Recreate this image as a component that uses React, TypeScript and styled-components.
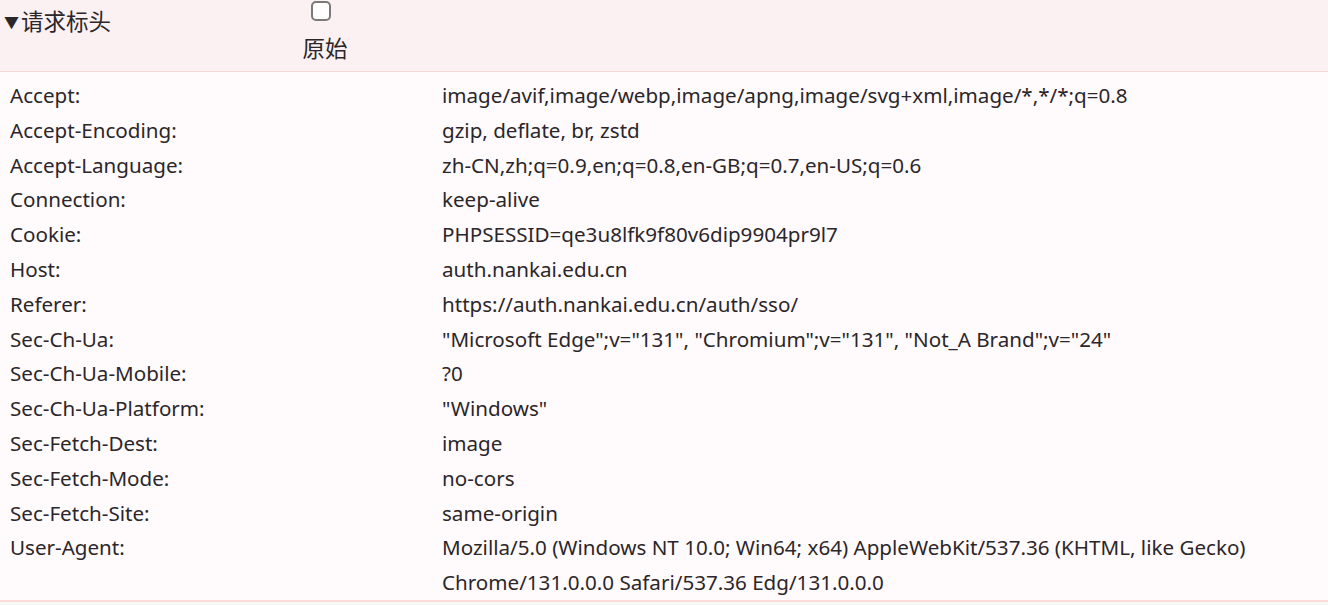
import { FC } from 'react'
import styled, { createGlobalStyle } from 'styled-components'

const GlobalStyle = createGlobalStyle`
  html, body {
    margin: 0;
    padding: 0;
    background: #f8f8f7;
  }
  body {
    font-family: 'Noto Sans', 'Noto Sans CJK SC', sans-serif;
    color: #2b2629;
  }
`

const headers: [string, string[]][] = [
  ['Accept:', ['image/avif,image/webp,image/apng,image/svg+xml,image/*,*/*;q=0.8']],
  ['Accept-Encoding:', ['gzip, deflate, br, zstd']],
  ['Accept-Language:', ['zh-CN,zh;q=0.9,en;q=0.8,en-GB;q=0.7,en-US;q=0.6']],
  ['Connection:', ['keep-alive']],
  ['Cookie:', ['PHPSESSID=qe3u8lfk9f80v6dip9904pr9l7']],
  ['Host:', ['auth.nankai.edu.cn']],
  ['Referer:', ['https://auth.nankai.edu.cn/auth/sso/']],
  ['Sec-Ch-Ua:', ['"Microsoft Edge";v="131", "Chromium";v="131", "Not_A Brand";v="24"']],
  ['Sec-Ch-Ua-Mobile:', ['?0']],
  ['Sec-Ch-Ua-Platform:', ['"Windows"']],
  ['Sec-Fetch-Dest:', ['image']],
  ['Sec-Fetch-Mode:', ['no-cors']],
  ['Sec-Fetch-Site:', ['same-origin']],
  [
    'User-Agent:',
    [
      'Mozilla/5.0 (Windows NT 10.0; Win64; x64) AppleWebKit/537.36 (KHTML, like Gecko)',
      'Chrome/131.0.0.0 Safari/537.36 Edg/131.0.0.0',
    ],
  ],
]

const App: FC = () => {
  return (
    <Panel>
      <GlobalStyle />
      <Header>
        <Title>
          <Arrow>▼</Arrow>请求标头
        </Title>
        <RawToggle>
          <Check type="checkbox" />
          <RawLabel>原始</RawLabel>
        </RawToggle>
      </Header>
      <Table>
        {headers.map(([name, lines]) => (
          <Row key={name}>
            <Name>{name}</Name>
            <Value>
              {lines.map((l) => (
                <div key={l}>{l}</div>
              ))}
            </Value>
          </Row>
        ))}
      </Table>
    </Panel>
  )
}

export default App

const Panel = styled.div`
  display: flex;
  flex-direction: column;
  width: 1328px;
`

const Header = styled.div`
  display: flex;
  align-items: flex-start;
  height: 71px;
  background: #fbf0f2;
  border-bottom: 1px solid #f7d9d9;
  font-size: 22.5px;
`

const Title = styled.div`
  display: flex;
  align-items: center;
  width: 296px;
  padding: 6px 0 0 4px;
  line-height: 32px;
`

const Arrow = styled.span`
  font-size: 15px;
  margin-right: 2px;
`

const RawToggle = styled.label`
  display: flex;
  flex-direction: column;
  align-items: center;
  width: 50px;
`

const Check = styled.input`
  appearance: none;
  -webkit-appearance: none;
  box-sizing: border-box;
  width: 20px;
  height: 20px;
  margin: 1px 9px 0 0;
  background: #fff;
  border: 2px solid #7a7a7a;
  border-radius: 5px;
`

const RawLabel = styled.span`
  margin-top: 13px;
  line-height: 30px;
`

const Table = styled.div`
  display: flex;
  flex-direction: column;
  padding: 6px 0 0;
  background: #fffbfd;
  border-bottom: 2px solid #f9dbd9;
  font-size: 20.6px;
`

const Row = styled.div`
  display: grid;
  grid-template-columns: 432px 1fr;
  padding-left: 10px;
  line-height: 34.8px;
`

const Name = styled.div`
  white-space: nowrap;
`

const Value = styled.div`
  white-space: nowrap;
`
